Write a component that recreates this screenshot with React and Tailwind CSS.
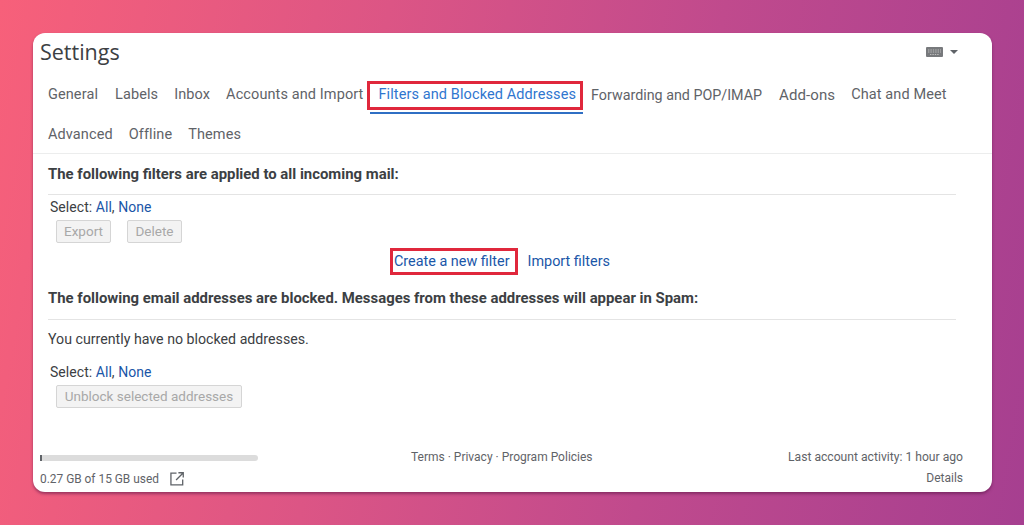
import React from "react";

const tabs3 = ["Advanced", "Offline", "Themes"];

function Tab({ children, className = "" }) {
  return <span className={`text-[14.5px] tracking-[0.1px] leading-[20px] text-[#5f6368] whitespace-nowrap ${className}`}>{children}</span>;
}

function SelectRow({ mt }) {
  return (
    <div className={`pl-[2px] text-[14px] leading-[18px] tracking-[0.05px] text-[#3c4043] ${mt}`}>
      Select: <span className="text-[#1a56a8]">All</span>, <span className="text-[#1a56a8]">None</span>
    </div>
  );
}

function Btn({ children, className = "" }) {
  return (
    <div className={`h-[23px] flex items-center justify-center rounded-[2px] border border-[#d5d5d5] bg-[#f3f3f3] text-[13.5px] text-[#a8a8a8] whitespace-nowrap ${className}`}>
      {children}
    </div>
  );
}

export default function App() {
  return (
    <div
      className="w-[1024px] h-[525px] overflow-hidden pt-[33px] pl-[33px] bg-[linear-gradient(100deg,#f7607a_0%,#dc5585_35%,#c04a8d_65%,#a63f90_100%)]"
      style={{ fontFamily: "Roboto, 'Liberation Sans', sans-serif" }}
    >
      <div className="w-[959px] h-[459px] bg-white rounded-[12px] flex flex-col shadow-[0_2px_3px_rgba(90,20,70,0.55)]">
        <div className="h-[37px] flex items-center justify-between pl-[7px] pr-[34px]">
          <span className="text-[21.5px] leading-[28px] text-[#3c4043]" style={{ fontFamily: "'Open Sans', sans-serif" }}>Settings</span>
          <div className="flex items-center gap-[7px] mt-[1px]">
            <svg width="17" height="10" viewBox="0 0 17 10">
              <rect width="17" height="10" rx="1" fill="#77797c" />
              <path d="M2 3h13M2 5h13M4 7.5h9" stroke="#c4c4c4" strokeWidth="0.9" strokeDasharray="1.4 1" />
            </svg>
            <div className="w-0 h-0 border-x-[4px] border-x-transparent border-t-[4px] border-t-[#5f6368]" />
          </div>
        </div>

        <div className="pl-[15px] mt-[15px] h-[20px] flex items-center">
          <div className="flex gap-[16px] items-center">
            <Tab className="mr-[1px]">General</Tab>
            <Tab>Labels</Tab>
            <Tab>Inbox</Tab>
            <Tab>Accounts and Import</Tab>
          </div>
          <div className="relative ml-[15px] text-[14.5px] tracking-[0.1px] leading-[20px] text-[#2f76cf] whitespace-nowrap">
            Filters and Blocked Addresses
            <div className="absolute left-[-11px] right-[-7px] top-[-4px] h-[29px] border-[3px] border-[#e0283c]" />
            <div className="absolute left-[-8px] right-[-7px] top-[27px] h-[2px] bg-[#2f6fc4]" />
          </div>
          <div className="flex gap-[16px] items-center ml-[15px]">
            <span className="text-[14.3px] leading-[20px] text-[#5f6368] whitespace-nowrap mr-[1px]">Forwarding and POP/IMAP</span>
            <Tab className="text-[15px]">Add-ons</Tab>
            <Tab>Chat and Meet</Tab>
          </div>
        </div>

        <div className="pl-[15px] mt-[20px] h-[20px] flex gap-[16px] items-center">
          {tabs3.map((t) => <Tab key={t}>{t}</Tab>)}
        </div>

        <div className="mt-[8px] border-t border-[#eceded]" />

        <div className="mx-[15px] w-[908px]">
          <div className="mt-[11px] h-[18px] text-[14.9px] leading-[18px] font-bold text-[#3c4043] whitespace-nowrap">
            The following filters are applied to all incoming mail:
          </div>
          <div className="mt-[11px] border-t border-[#e4e4e4]" />
          <SelectRow mt="mt-[3px]" />
          <div className="flex gap-[16px] pl-[8px] mt-[4px]">
            <Btn className="w-[55px]">Export</Btn>
            <Btn className="w-[55px]">Delete</Btn>
          </div>
          <div className="relative mt-[8px] h-[22px] flex items-center text-[14.4px] text-[#1a56a8] whitespace-nowrap pl-[346px]">
            <span>Create a new filter</span>
            <span className="ml-[18px]">Import filters</span>
            <div className="absolute left-[342px] top-[-3px] w-[128px] h-[27px] border-[3px] border-[#e0283c]" />
          </div>
          <div className="mt-[16px] h-[18px] text-[14.9px] leading-[18px] font-bold text-[#3c4043] whitespace-nowrap">
            The following email addresses are blocked. Messages from these addresses will appear in Spam:
          </div>
          <div className="mt-[12px] border-t border-[#e4e4e4]" />
          <div className="mt-[9px] text-[14.2px] leading-[20px] text-[#3c4043]">You currently have no blocked addresses.</div>
          <SelectRow mt="mt-[14px]" />
          <div className="pl-[8px] mt-[4px]">
            <Btn className="w-[186px]">Unblock selected addresses</Btn>
          </div>
        </div>

        <div className="mt-[42px] flex justify-between pl-[7px] pr-[29px]">
          <div className="w-[218px]">
            <div className="mt-[5px] h-[6px] rounded-full bg-[#dcdcdc]">
              <div className="w-[2px] h-[6px] bg-[#5f6368]" />
            </div>
            <div className="mt-[10px] flex items-center gap-[11px]">
              <span className="text-[11.9px] leading-[16px] text-[#5f6368]">0.27 GB of 15 GB used</span>
              <svg width="14" height="14" viewBox="0 0 15 15" fill="none" stroke="#5f6368" strokeWidth="1.4">
                <path d="M7 1.2H1v12.6h12.6V8" />
                <path d="M9 .8h5.2V6M14 1 6.5 8.5" />
              </svg>
            </div>
          </div>
          <div className="text-[12px] leading-[16px] text-[#5f6368] mt-[-1px] ml-[153px] mr-auto whitespace-nowrap">
            Terms · Privacy · Program Policies
          </div>
          <div className="text-right text-[12px] leading-[16px] text-[#5f6368] mt-[-1px]">
            <div className="text-[12.15px]">Last account activity: 1 hour ago</div>
            <div className="mt-[5px]">Details</div>
          </div>
        </div>
      </div>
    </div>
  );
}
